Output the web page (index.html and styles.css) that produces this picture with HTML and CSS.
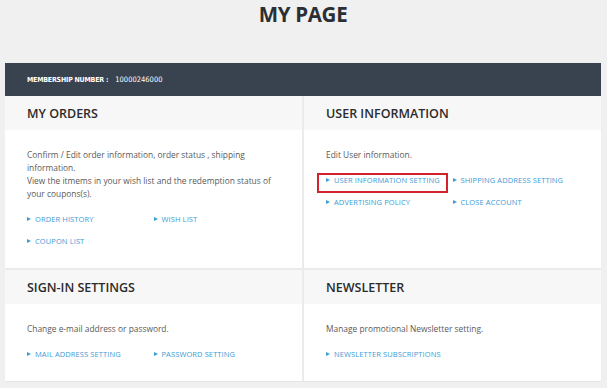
FILE: index.html
```html
<!DOCTYPE html>
<html>
<head>
  <meta charset="UTF-8" />
  <title>My Page</title>
  <link rel="stylesheet" href="styles.css">
</head>
<body>
  <div class="page">
    <h1>MY PAGE</h1>

    <div class="member-bar">
      <span class="member-label">MEMBERSHIP NUMBER :</span>
      <span class="member-number">10000246000</span>
    </div>

    <div class="panels">
      <div class="panel">
        <h2 class="panel-title">MY ORDERS</h2>
        <div class="panel-body">
          <p>Confirm / Edit order information, order status , shipping information.<br>View the itmems in your wish list and the redemption status of your coupons(s).</p>
          <ul class="links">
            <li><a href="#">ORDER HISTORY</a></li>
            <li><a href="#">WISH LIST</a></li>
            <li><a href="#">COUPON LIST</a></li>
          </ul>
        </div>
      </div>

      <div class="panel">
        <h2 class="panel-title">USER INFORMATION</h2>
        <div class="panel-body">
          <p>Edit User information.</p>
          <ul class="links">
            <li><a href="#" class="highlight">USER INFORMATION SETTING</a></li>
            <li><a href="#">SHIPPING ADDRESS SETTING</a></li>
            <li><a href="#">ADVERTISING POLICY</a></li>
            <li><a href="#">CLOSE ACCOUNT</a></li>
          </ul>
        </div>
      </div>

      <div class="panel">
        <h2 class="panel-title">SIGN-IN SETTINGS</h2>
        <div class="panel-body">
          <p>Change e-mail address or password.</p>
          <ul class="links">
            <li><a href="#">MAIL ADDRESS SETTING</a></li>
            <li><a href="#">PASSWORD SETTING</a></li>
          </ul>
        </div>
      </div>

      <div class="panel">
        <h2 class="panel-title">NEWSLETTER</h2>
        <div class="panel-body">
          <p>Manage promotional Newsletter setting.</p>
          <ul class="links">
            <li><a href="#">NEWSLETTER SUBSCRIPTIONS</a></li>
          </ul>
        </div>
      </div>
    </div>
  </div>
</body>
</html>
```

FILE: styles.css
```css
body {
  margin: 0;
  background-color: #f0f0f0;
  font-family: "Open Sans", "Noto Sans", sans-serif;
  color: #333;
}

.page {
  padding: 0 6px 0 5px;
}

h1 {
  margin: 0;
  height: 63px;
  text-align: center;
  font-size: 20.5px;
  line-height: 29px;
  font-weight: 700;
  color: #2b2f33;
  letter-spacing: -0.3px;
}

.member-bar {
  height: 33px;
  display: flex;
  align-items: center;
  gap: 7px;
  padding-left: 22px;
  background-color: #38434f;
  color: #fff;
  font-family: "DejaVu Sans Condensed", "DejaVu Sans", sans-serif;
  font-stretch: condensed;
}

.member-label {
  font-size: 7px;
  font-weight: bold;
  letter-spacing: -0.2px;
}

.member-number {
  font-size: 7.5px;
}

.panels {
  display: grid;
  grid-template-columns: 1fr 1fr;
  gap: 2px;
  background-color: #ebebeb;
  border-bottom: 1px solid #e6e6e6;
}

.panel {
  background-color: #fff;
}

.panel-title {
  margin: 0;
  height: 34px;
  display: flex;
  align-items: center;
  padding-left: 22px;
  background-color: #f7f7f7;
  font-size: 12.5px;
  font-weight: 600;
  color: #2b2b2b;
}

.panel-body {
  padding: 18px 22px 20px;
}

.panel-body p {
  margin: 0 0 13px;
  font-size: 8.4px;
  line-height: 13px;
  color: #5a5a5a;
}

.links {
  margin: 0;
  padding: 0;
  list-style: none;
  display: grid;
  grid-template-columns: 1fr 1fr;
  row-gap: 9px;
}

.links li {
  font-size: 7.5px;
  line-height: 13px;
}

.links a {
  position: relative;
  display: inline-block;
  padding-left: 8px;
  letter-spacing: 0.1px;
  color: #3d9bd6;
  text-decoration: none;
}

.links a::before {
  content: "";
  position: absolute;
  left: 0;
  top: 4px;
  border-left: 4px solid #3d9bd6;
  border-top: 2.5px solid transparent;
  border-bottom: 2.5px solid transparent;
}

.links a.highlight::after {
  content: "";
  position: absolute;
  top: -1px;
  left: -9px;
  right: -8px;
  bottom: -6px;
  border: 2px solid #d3222c;
}
```
